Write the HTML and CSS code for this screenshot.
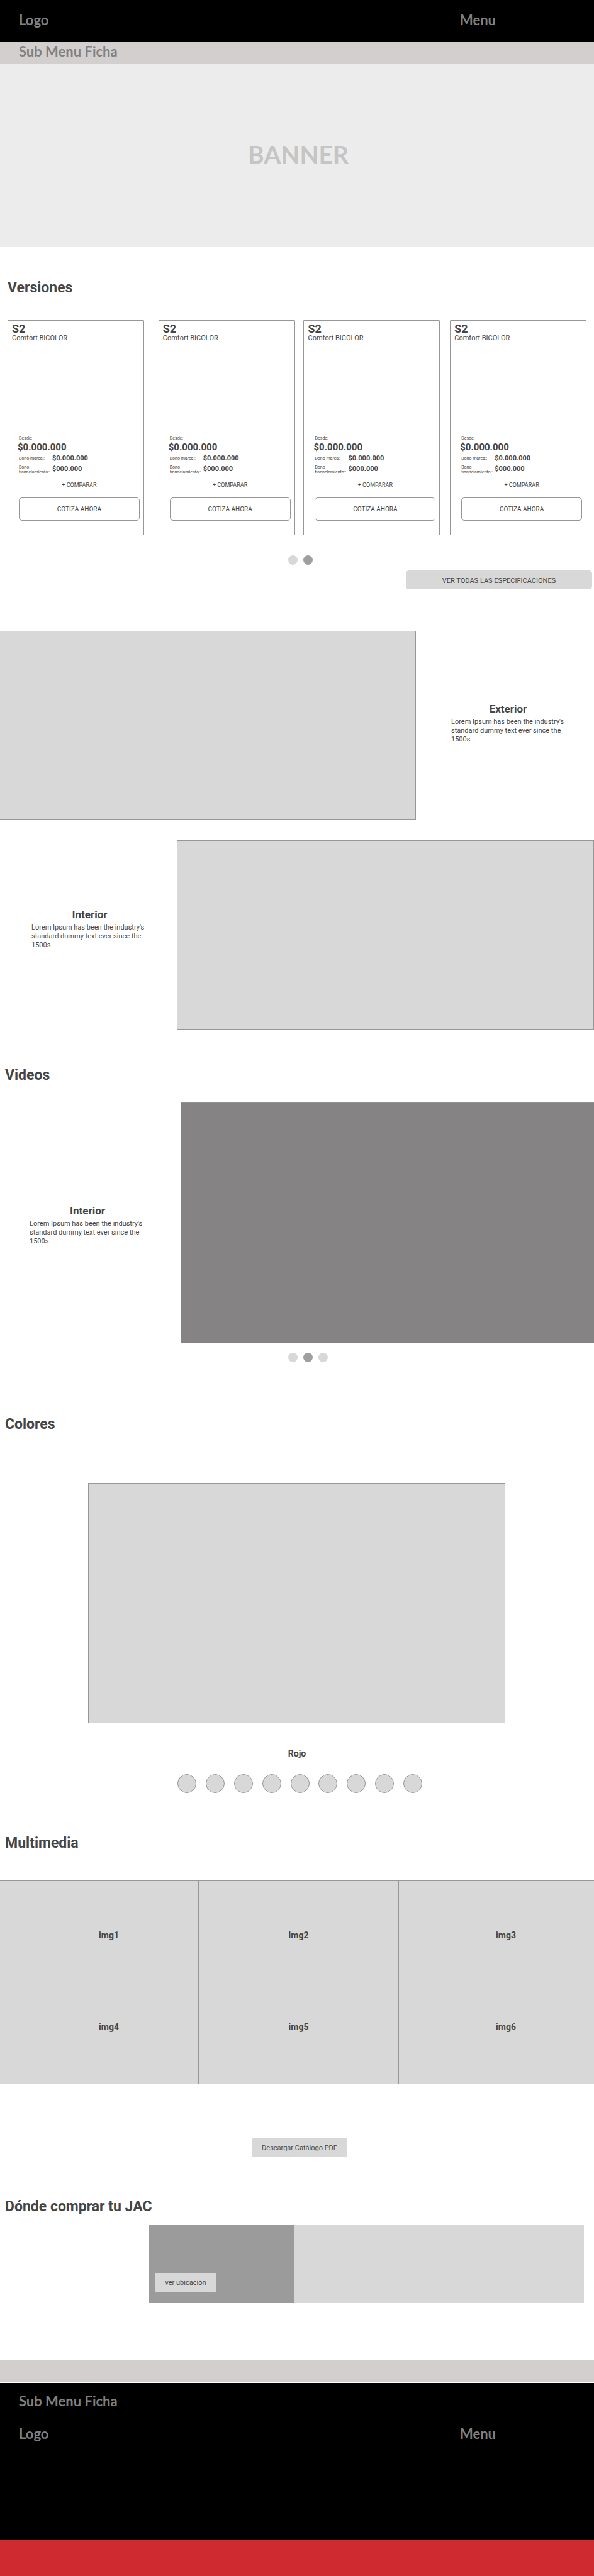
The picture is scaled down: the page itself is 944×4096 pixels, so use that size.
FILE: index.html
```html
<!DOCTYPE html>
<html lang="es">
<head>
<meta charset="utf-8">
<meta name="viewport" content="width=device-width, initial-scale=1">
<title>Ficha</title>
<link rel="stylesheet" href="styles.css">
</head>
<body>
<header class="bar bar-top">
  <a class="brand" href="#">Logo</a>
  <a class="brand menu-link" href="#">Menu</a>
</header>
<nav class="submenu"><a class="brand" href="#">Sub Menu Ficha</a></nav>
<main>
  <section class="banner"><h1>BANNER</h1></section>

  <section class="versions">
    <h2>Versiones</h2>
    <div class="cards">
      <article class="card">
        <h3>S2</h3>
        <p class="trim">Comfort BICOLOR</p>
        <div class="offer">
          <p class="from">Desde:</p>
          <p class="price">$0.000.000</p>
          <dl><dt>Bono marca::</dt><dd>$0.000.000</dd><dt>Bono fiannciamiento::</dt><dd>$000.000</dd></dl>
          <button class="compare" type="button">+ COMPARAR</button>
          <button class="quote" type="button">COTIZA AHORA</button>
        </div>
      </article>
      <article class="card">
        <h3>S2</h3>
        <p class="trim">Comfort BICOLOR</p>
        <div class="offer">
          <p class="from">Desde:</p>
          <p class="price">$0.000.000</p>
          <dl><dt>Bono marca::</dt><dd>$0.000.000</dd><dt>Bono fiannciamiento::</dt><dd>$000.000</dd></dl>
          <button class="compare" type="button">+ COMPARAR</button>
          <button class="quote" type="button">COTIZA AHORA</button>
        </div>
      </article>
      <article class="card">
        <h3>S2</h3>
        <p class="trim">Comfort BICOLOR</p>
        <div class="offer">
          <p class="from">Desde:</p>
          <p class="price">$0.000.000</p>
          <dl><dt>Bono marca::</dt><dd>$0.000.000</dd><dt>Bono fiannciamiento::</dt><dd>$000.000</dd></dl>
          <button class="compare" type="button">+ COMPARAR</button>
          <button class="quote" type="button">COTIZA AHORA</button>
        </div>
      </article>
      <article class="card">
        <h3>S2</h3>
        <p class="trim">Comfort BICOLOR</p>
        <div class="offer">
          <p class="from">Desde:</p>
          <p class="price">$0.000.000</p>
          <dl><dt>Bono marca::</dt><dd>$0.000.000</dd><dt>Bono fiannciamiento::</dt><dd>$000.000</dd></dl>
          <button class="compare" type="button">+ COMPARAR</button>
          <button class="quote" type="button">COTIZA AHORA</button>
        </div>
      </article>
    </div>
    <div class="dots">
      <button class="dot" type="button" aria-label="Página 1"></button>
      <button class="dot active" type="button" aria-label="Página 2"></button>
    </div>
    <button class="specs" type="button">VER TODAS LAS ESPECIFICACIONES</button>
  </section>

  <section class="feature exterior">
    <div class="picture"></div>
    <div class="copy"><h3>Exterior</h3><p>Lorem Ipsum has been the industry's standard dummy text ever since the 1500s</p></div>
  </section>
  <section class="feature interior">
    <div class="copy"><h3>Interior</h3><p>Lorem Ipsum has been the industry's standard dummy text ever since the 1500s</p></div>
    <div class="picture"></div>
  </section>

  <section class="videos">
    <h2>Videos</h2>
    <div class="feature clip">
      <div class="copy"><h3>Interior</h3><p>Lorem Ipsum has been the industry's standard dummy text ever since the 1500s</p></div>
      <div class="picture"></div>
    </div>
    <div class="dots">
      <button class="dot" type="button" aria-label="Video 1"></button>
      <button class="dot active" type="button" aria-label="Video 2"></button>
      <button class="dot" type="button" aria-label="Video 3"></button>
    </div>
  </section>

  <section class="colors">
    <h2>Colores</h2>
    <div class="color-view"></div>
    <p class="color-name">Rojo</p>
    <div class="swatches" role="radiogroup" aria-label="Color">
      <input type="radio" name="color" aria-label="Color 1">
      <input type="radio" name="color" aria-label="Color 2">
      <input type="radio" name="color" aria-label="Color 3">
      <input type="radio" name="color" aria-label="Color 4">
      <input type="radio" name="color" aria-label="Color 5">
      <input type="radio" name="color" aria-label="Color 6">
      <input type="radio" name="color" aria-label="Color 7">
      <input type="radio" name="color" aria-label="Color 8">
      <input type="radio" name="color" aria-label="Color 9">
    </div>
  </section>

  <section class="media">
    <h2>Multimedia</h2>
    <div class="gallery">
      <div class="tile">img1</div>
      <div class="tile">img2</div>
      <div class="tile">img3</div>
      <div class="tile">img4</div>
      <div class="tile">img5</div>
      <div class="tile">img6</div>
    </div>
    <div class="download"><button class="chip" type="button">Descargar Catálogo PDF</button></div>
  </section>

  <section class="dealers">
    <h2>Dónde comprar tu JAC</h2>
    <div class="dealer-row">
      <div class="dealer"><button class="chip" type="button">ver ubicación</button></div>
      <div class="map"></div>
    </div>
  </section>
</main>
<div class="strip"></div>
<footer>
  <div class="footer-body">
    <a class="brand" href="#">Sub Menu Ficha</a>
    <div class="bar">
      <a class="brand" href="#">Logo</a>
      <a class="brand menu-link" href="#">Menu</a>
    </div>
  </div>
  <div class="footer-end"></div>
</footer>
</body>
</html>
```
FILE: styles.css
```css
* { box-sizing: border-box; }
body, h1, h2, h3, p, dl, dd { margin: 0; }
body {
  background: #fff;
  color: #454545;
  font-family: Roboto, "Liberation Sans", sans-serif;
}
button { font: inherit; color: inherit; border: 0; padding: 0; background: none; cursor: pointer; }

.brand { color: #808080; font: 700 22px/26px Lato, sans-serif; text-decoration: none; }
.bar { display: grid; grid-template-columns: 731fr 213fr; align-items: center; }
.bar .brand:first-child { padding-left: 30px; }
.bar-top { height: 66px; padding-bottom: 2px; background: #000; }
.submenu { height: 36px; padding: 3px 30px; background: #d3cfce; }

.banner { display: flex; align-items: center; justify-content: center; height: 291px; padding: 0 0 6px 4px; background: #ececec; }
.banner h1 { color: #c5c5c5; font: 700 39px/48px Lato, sans-serif; }

h2 { padding: 1px 0 0 8px; font-size: 23px; line-height: 28px; }

.versions { display: flex; flex-direction: column; padding-top: 50px; }
.versions h2 { padding-left: 12px; }
.cards { display: grid; grid-template-columns: 217fr 23fr 217fr 14fr 217fr 16fr 217fr; margin: 37px 12px 32px; }
.card { grid-row: 1; grid-column: 1; display: flex; flex-direction: column; min-height: 342px; padding: 4px 6px 22px; border: 1px solid #979797; border-radius: 1px; }
.card:nth-child(2) { grid-column: 3; }
.card:nth-child(3) { grid-column: 5; }
.card:nth-child(4) { grid-column: 7; }
.card h3 { font-size: 18px; line-height: 18px; }
.trim { font-size: 11px; line-height: 12px; }
.offer { display: flex; flex-direction: column; margin-top: auto; padding-left: 11px; }
.from { font-size: 7px; line-height: 8px; }
.price { margin: 1px -2px 2px; font-size: 15px; line-height: 18px; font-weight: 700; }
.offer dl { display: grid; grid-template-columns: 53px 1fr; row-gap: 3px; margin-bottom: 12px; }
.offer dt { max-height: 13px; overflow: hidden; font-size: 7px; line-height: 8px; }
.offer dt:first-child { line-height: 14px; }
.offer dd { font-size: 11px; line-height: 14px; font-weight: 700; }
.compare { align-self: center; margin-bottom: 14px; font-size: 9px; line-height: 12px; }
.quote { height: 37px; border: 1px solid #979797; border-radius: 5px; font-size: 10px; }

.dots { display: flex; gap: 9px; padding-left: 458px; }
.dot { width: 15px; height: 15px; border-radius: 50%; background: #d8d8d8; }
.dot.active { background: #9f9f9f; }
.specs { align-self: flex-end; width: 296px; height: 30px; margin: 9px 3px 0 0; padding-top: 3px; border-radius: 5px; background: #d8d8d8; font-size: 11px; }

.feature { display: grid; }
.exterior { grid-template-columns: 661fr 283fr; margin-top: 66px; }
.interior { grid-template-columns: 281fr 663fr; margin-top: 32px; }
.clip { grid-template-columns: 287fr 657fr; margin-top: 29px; }
.picture { height: 301px; border: 1px solid #979797; background: #d8d8d8; }
.exterior .picture { border-left: 0; }
.clip .picture { height: 382px; border-color: #8f9090; border-width: 1px 0 0 1px; background: #858383; }
.copy { padding: 114px 46px 0 56px; }
.interior .copy { padding: 108px 46px 0 50px; }
.clip .copy { padding: 162px 56px 0 47px; }
.copy h3 { font-size: 17px; line-height: 20px; text-align: center; }
.copy p { margin-top: 4px; font-size: 11px; line-height: 14px; }

.videos { padding-top: 58px; }
.videos .dots { padding-top: 16px; }

.colors { padding-top: 84px; }
.color-view { height: 382px; margin: 79px 141px 38px 140px; border: 1px solid #979797; background: #d8d8d8; }
.color-name { font-size: 14px; line-height: 20px; font-weight: 700; text-align: center; }
.swatches { display: flex; justify-content: space-between; margin: 23px 273px 0 282px; }
.swatches input { appearance: none; width: 30px; height: 30px; margin: 0; border: 1px solid #979797; border-radius: 50%; background: #d8d8d8; }

.media { padding-top: 65px; }
.gallery { display: grid; grid-template-columns: 316fr 318fr 310fr; grid-template-rows: 161px 162px; margin-top: 45px; border-top: 1px solid #979797; }
.tile { display: flex; align-items: center; justify-content: center; border: solid #979797; border-width: 0 1px 1px 0; background: #d8d8d8; font-size: 14px; line-height: 20px; font-weight: 700; }
.tile:nth-child(-n+3) { padding-top: 12px; }
.tile:nth-child(n+4) { padding-bottom: 20px; }
.tile:nth-child(3n+1), .tile:nth-child(3n) { padding-left: 31px; }
.tile:nth-child(3n) { padding-left: 30px; border-right: 0; }
.chip { display: block; height: 30px; padding: 0 16px; border-radius: 2px; background: #d8d8d8; font-size: 11px; }
.download { display: flex; justify-content: center; padding: 86px 0 0 8px; }
.download .chip { min-width: 152px; }

.dealers { padding-top: 64px; }
.dealer-row { display: grid; grid-template-columns: 1fr 2fr; margin: 15px 16px 90px 237px; }
.dealer { display: flex; align-items: flex-end; height: 124px; padding: 0 9px 18px; background: #9b9b9b; }
.dealer .chip { min-width: 98px; }
.map { background: #d8d8d8; }

.strip { height: 35px; background: #d3cfce; }
footer { margin-top: 2px; }
.footer-body { min-height: 249px; padding-top: 16px; background: #000; }
.footer-body > .brand { display: block; padding-left: 30px; }
.footer-body .bar { margin-top: 26px; }
.footer-end { height: 58px; background: #cf2a30; }
```
